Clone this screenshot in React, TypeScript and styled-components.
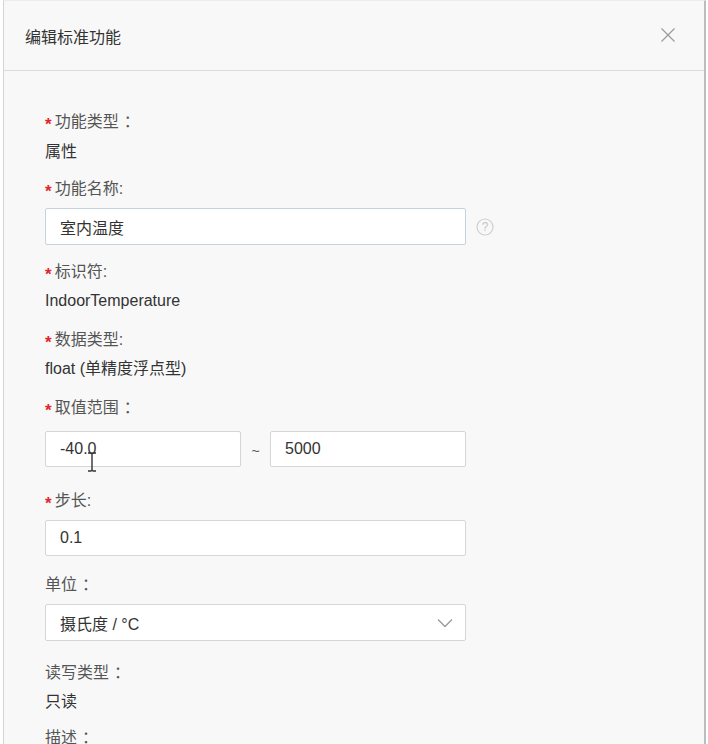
import styled, { createGlobalStyle } from 'styled-components';

const GlobalStyle = createGlobalStyle`
  html, body {
    margin: 0;
    padding: 0;
    background: #ffffff;
  }
  body {
    font-family: "Liberation Sans", "Noto Sans CJK SC", sans-serif;
    font-size: 16px;
    color: #333;
  }
`;

const Page = styled.div`
  width: 708px;
  height: 744px;
  overflow: hidden;
  position: relative;
`;

const Panel = styled.section`
  margin: 0 2px 0 3px;
  height: 744px;
  box-sizing: border-box;
  background: #f8f8f8;
  border-left: 1px solid #d4d4d4;
  border-right: 2px solid #bdbdbd;
  border-top: 1px solid #ececec;
`;

const Header = styled.header`
  display: flex;
  align-items: center;
  justify-content: space-between;
  height: 69px;
  padding: 0 24px 0 21px;
  border-bottom: 1px solid #dcdcdc;
`;

const Title = styled.h2`
  margin: 0;
  font-size: 16px;
  font-weight: 400;
  color: #333;
`;

const CloseButton = styled.button`
  display: flex;
  align-items: center;
  justify-content: center;
  width: 24px;
  height: 24px;
  padding: 0;
  margin-top: -2px;
  border: none;
  background: transparent;
  cursor: pointer;
`;

const Body = styled.div`
  padding: 41px 0 0 41px;
`;

const Field = styled.div<{ $top?: number }>`
  margin-top: ${(p) => p.$top ?? 0}px;
`;

const Label = styled.div<{ $gap?: number }>`
  display: flex;
  align-items: center;
  height: 20px;
  line-height: 20px;
  margin-bottom: ${(p) => p.$gap ?? 9}px;
  color: #555;
  font-size: 16px;
`;

const Required = styled.span`
  color: #e0262b;
  font-size: 17px;
  font-weight: 700;
  margin-right: 3px;
  margin-top: 5px;
`;

const Colon = styled.span`
  padding-left: 5px;
`;

const Value = styled.div`
  height: 20px;
  line-height: 20px;
  color: #333;
  font-size: 16px;
`;

const Row = styled.div`
  display: flex;
  align-items: center;
`;

const Input = styled.div<{ $width?: number; $focused?: boolean; $height?: number }>`
  display: flex;
  align-items: center;
  justify-content: space-between;
  box-sizing: border-box;
  width: ${(p) => p.$width ?? 421}px;
  height: ${(p) => p.$height ?? 37}px;
  padding: 0 12px 0 14px;
  background: #ffffff;
  border: 1px solid ${(p) => (p.$focused ? '#c5d3e0' : '#d6d6d6')};
  border-radius: 2px;
  color: #333;
  font-size: 16px;
`;

const Tilde = styled.span`
  width: 29px;
  text-align: center;
  color: #555;
  font-size: 14px;
  margin-top: 4px;
`;

const HelpIcon = styled.span`
  display: flex;
  margin-left: 10px;
`;

const Cursor = styled.svg`
  position: absolute;
  left: 87px;
  top: 452px;
`;

const Chevron = () => (
  <svg width="16" height="10" viewBox="0 0 16 10">
    <polyline points="1,1.5 8,8.5 15,1.5" fill="none" stroke="#9a9a9a" strokeWidth="1.3" />
  </svg>
);

export default function App() {
  return (
    <Page>
      <GlobalStyle />
      <Panel>
        <Header>
          <Title>编辑标准功能</Title>
          <CloseButton aria-label="关闭">
            <svg width="16" height="16" viewBox="0 0 16 16">
              <path d="M1.5 1.5 L14.5 14.5 M14.5 1.5 L1.5 14.5" stroke="#9a9a9a" strokeWidth="1.2" />
            </svg>
          </CloseButton>
        </Header>

        <Body>
          <Field>
            <Label $gap={10}>
              <Required>*</Required>功能类型<Colon>：</Colon>
            </Label>
            <Value>属性</Value>
          </Field>

          <Field $top={17}>
            <Label>
              <Required>*</Required>功能名称:
            </Label>
            <Row>
              <Input $focused>室内温度</Input>
              <HelpIcon>
                <svg width="18" height="18" viewBox="0 0 18 18">
                  <circle cx="9" cy="9" r="8" fill="none" stroke="#cfcfcf" strokeWidth="1.2" />
                  <text x="9" y="13.2" textAnchor="middle" fontSize="12" fill="#c4c4c4" fontFamily="Liberation Sans, sans-serif">
                    ?
                  </text>
                </svg>
              </HelpIcon>
            </Row>
          </Field>

          <Field $top={17}>
            <Label>
              <Required>*</Required>标识符:
            </Label>
            <Value>IndoorTemperature</Value>
          </Field>

          <Field $top={19}>
            <Label>
              <Required>*</Required>数据类型:
            </Label>
            <Value>float (单精度浮点型)</Value>
          </Field>

          <Field $top={19}>
            <Label $gap={13}>
              <Required>*</Required>取值范围<Colon>：</Colon>
            </Label>
            <Row>
              <Input $width={196} $height={36}>-40.0</Input>
              <Tilde>~</Tilde>
              <Input $width={196} $height={36}>5000</Input>
            </Row>
          </Field>

          <Field $top={24}>
            <Label>
              <Required>*</Required>步长:
            </Label>
            <Input $height={36}>0.1</Input>
          </Field>

          <Field $top={19}>
            <Label>
              单位<Colon>：</Colon>
            </Label>
            <Input>
              <span>摄氏度 / °C</span>
              <Chevron />
            </Input>
          </Field>

          <Field $top={22}>
            <Label>
              读写类型<Colon>：</Colon>
            </Label>
            <Value>只读</Value>
          </Field>

          <Field $top={16}>
            <Label>
              描述<Colon>：</Colon>
            </Label>
          </Field>
        </Body>
      </Panel>

      <Cursor width="10" height="20" viewBox="0 0 10 20">
        <path d="M1 1 H4 Q5 1 5 3 V17 Q5 19 4 19 H1 M9 1 H6 Q5 1 5 3 M5 17 Q5 19 6 19 H9" fill="none" stroke="#333" strokeWidth="1.4" />
      </Cursor>
    </Page>
  );
}
